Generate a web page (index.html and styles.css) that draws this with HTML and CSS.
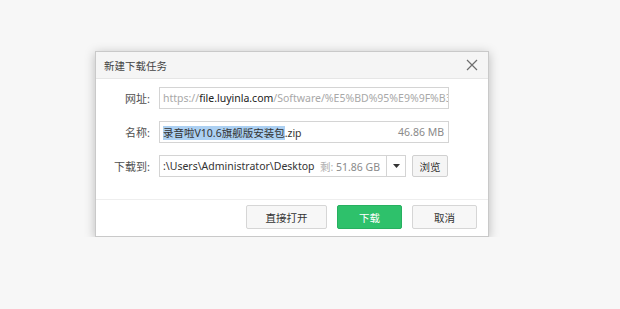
FILE: index.html
```
<!DOCTYPE html>
<html>
<head>
    <title>新建下载任务</title>
    <link rel="stylesheet" href="styles.css">
</head>
<body>
    <div class="dialog">
        <!-- Title bar -->
        <div class="titlebar">
            <span class="title">新建下载任务</span>
            <svg class="close" width="12" height="12" viewBox="0 0 12 12">
                <path d="M1 1 L11 11 M11 1 L1 11" stroke="#6e6e6e" stroke-width="1.2" fill="none"></path>
            </svg>
        </div>
        <!-- Form -->
        <div class="form">
            <label class="label">网址:</label>
            <div class="field url">
                <span class="dim">https://</span><span class="host">file.luyinla.com</span><span class="dim">/Software/%E5%BD%95%E9%9F%B3</span>
            </div>

            <label class="label">名称:</label>
            <div class="field name">
                <span class="text"><span class="selected">录音啦V10.6旗舰版安装包</span>.zip</span>
                <span class="size">46.86 MB</span>
            </div>

            <label class="label">下载到:</label>
            <div class="path-row">
                <div class="field path">
                    <span class="text">:\Users\Administrator\Desktop</span>
                    <span class="free"><span class="free-key">剩:</span> 51.86 GB</span>
                </div>
                <div class="dropdown">
                    <svg width="7" height="4" viewBox="0 0 7 4"><path d="M0 0 L7 0 L3.5 4 Z" fill="#333"></path></svg>
                </div>
                <button class="browse">浏览</button>
            </div>
        </div>
        <!-- Footer buttons -->
        <div class="footer">
            <button class="btn open">直接打开</button>
            <button class="btn primary">下载</button>
            <button class="btn">取消</button>
        </div>
    </div>
</body>
</html>
```

FILE: styles.css
```
body {
    margin: 0;
    padding: 51px 0 0 95px;
    background-color: #f7f7f7;
    font-family: "Noto Sans", "Noto Sans CJK SC", sans-serif;
    font-size: 10.5px;
    color: #333333;
}
.dialog {
    width: 392px;
    border: 1px solid #c9c9c9;
    background-color: #ffffff;
    box-shadow: 0 2px 10px rgba(0, 0, 0, 0.25);
}
.titlebar {
    height: 26px;
    display: flex;
    align-items: center;
    justify-content: space-between;
    padding: 0 10px 0 8px;
    background-color: #f5f5f5;
    border-bottom: 1px solid #e6e6e6;
}
.title {
    color: #444444;
}
.form {
    display: grid;
    grid-template-columns: 54px 290px;
    column-gap: 9px;
    row-gap: 12px;
    align-items: center;
    padding: 8px 0 22px 0;
}
.label {
    text-align: right;
    color: #505050;
    font-size: 11px;
}
.field {
    height: 20px;
    border: 1px solid #d4d4d4;
    display: flex;
    align-items: center;
    padding: 0 3px;
    white-space: nowrap;
    overflow: hidden;
}
.dim {
    color: #a8a8a8;
}
.host {
    color: #222222;
}
.name {
    justify-content: space-between;
}
.selected {
    background-color: #acd0f2;
}
.size {
    color: #8a8a8a;
    padding-right: 1px;
}
.path-row {
    display: flex;
    align-items: center;
}
.path {
    width: 220px;
    justify-content: space-between;
}
.path .text {
    min-width: 0;
    overflow: hidden;
}
.free {
    flex-shrink: 0;
    color: #8a8a8a;
    padding: 0 3px 0 4px;
}
.free-key {
    color: #b0b0b0;
}
.dropdown {
    width: 18px;
    height: 20px;
    border: 1px solid #d4d4d4;
    border-left: none;
    display: flex;
    align-items: center;
    justify-content: center;
}
.browse {
    margin-left: 6px;
    width: 36px;
    height: 22px;
    padding: 0;
    border: 1px solid #d0d0d0;
    border-radius: 2px;
    background-color: #f5f5f5;
    font-family: inherit;
    font-size: 10.5px;
    color: #333333;
}
.footer {
    border-top: 1px solid #eeeeee;
    display: flex;
    justify-content: flex-end;
    gap: 10px;
    padding: 5px 11px 7px 0;
}
.btn {
    width: 65px;
    height: 24px;
    padding: 0;
    border: 1px solid #d6d6d6;
    border-radius: 2px;
    background-color: #f7f7f7;
    font-family: inherit;
    font-size: 10.5px;
    color: #333333;
}
.btn.open {
    width: 81px;
}
.btn.primary {
    background-color: #2ec16b;
    border-color: #27b060;
    color: #ffffff;
}
```
